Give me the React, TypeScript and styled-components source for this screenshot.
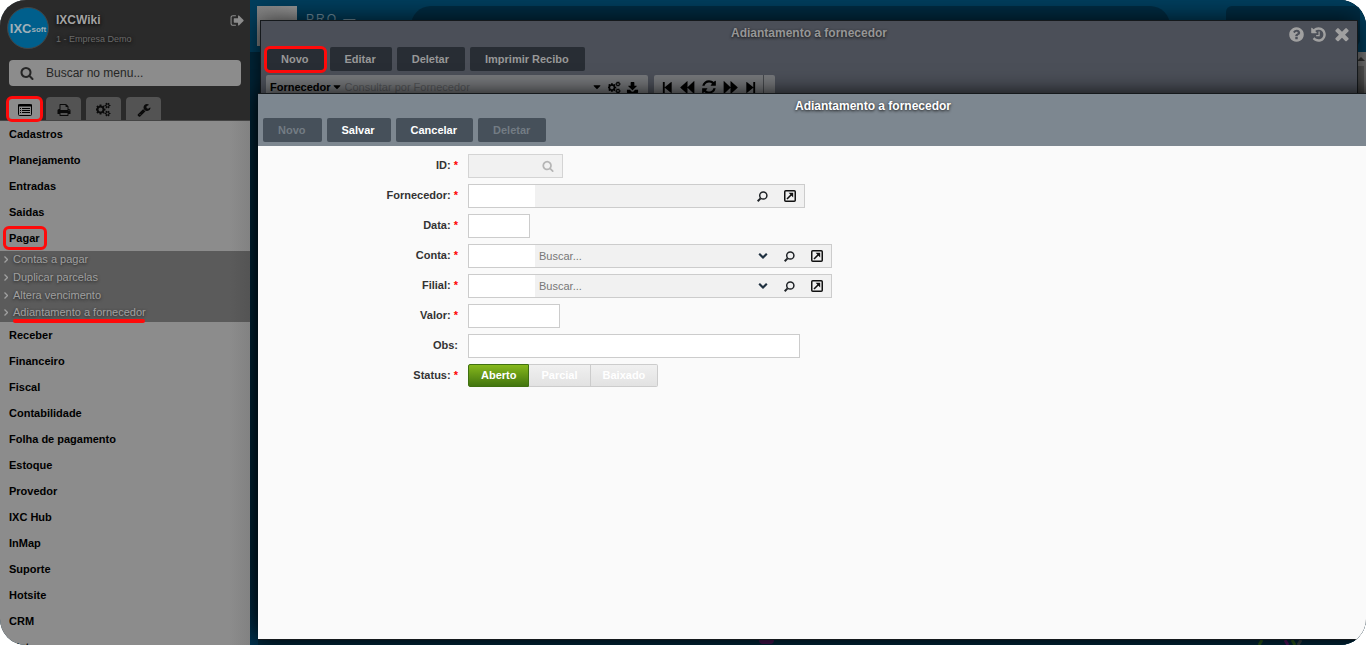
import React from "react";
import styled, { createGlobalStyle, css } from "styled-components";

const Global = createGlobalStyle`
  * { box-sizing: border-box; }
  html, body { margin: 0; background: #fff; }
  body, button, input { font-family: "Liberation Sans", Arial, sans-serif; font-size: 11px; }
  button { cursor: pointer; }
  ul { list-style: none; margin: 0; padding: 0; }
`;

/* ---------- icons ---------- */

const PATHS = {
  signOut:
    "M704 1440q0 4 1 20t.5 26.5-3 23.5-10 19.5-20.5 6.5h-320q-119 0-203.5-84.5t-84.5-203.5v-704q0-119 84.5-203.5t203.5-84.5h320q13 0 22.5 9.5t9.5 22.5q0 4 1 20t.5 26.5-3 23.5-10 19.5-20.5 6.5h-320q-66 0-113 47t-47 113v704q0 66 47 113t113 47h312l11.5 1 11.5 3 8 5.5 7 9 2 13.5zm928-544q0 26-19 45l-544 544q-19 19-45 19t-45-19-19-45v-288h-448q-26 0-45-19t-19-45v-384q0-26 19-45t45-19h448v-288q0-26 19-45t45-19 45 19l544 544q19 19 19 45z",
  search:
    "M1216 832q0-185-131.5-316.5t-316.5-131.5-316.5 131.5-131.5 316.5 131.5 316.5 316.5 131.5 316.5-131.5 131.5-316.5zm512 832q0 52-38 90t-90 38q-54 0-90-38l-343-342q-179 124-399 124-143 0-273.5-55.5t-225-150-150-225-55.5-273.5 55.5-273.5 150-225 225-150 273.5-55.5 273.5 55.5 225 150 150 225 55.5 273.5q0 220-124 399l343 343q37 37 37 90z",
  print:
    "M448 1536h896v-256h-896v256zm0-640h896v-384h-160q-40 0-68-28t-28-68v-160h-640v640zm1152 64q0-26-19-45t-45-19-45 19-19 45 19 45 45 19 45-19 19-45zm128 0v416q0 13-9.5 22.5t-22.5 9.5h-224v160q0 40-28 68t-68 28h-960q-40 0-68-28t-28-68v-160h-224q-13 0-22.5-9.5t-9.5-22.5v-416q0-79 56.5-135.5t135.5-56.5h64v-544q0-40 28-68t68-28h672q40 0 88 20t76 48l152 152q28 28 48 76t20 88v256h64q79 0 135.5 56.5t56.5 135.5z",
  wrench:
    "M448 1472q0-26-19-45t-45-19-45 19-19 45 19 45 45 19 45-19 19-45zm644-420l-682 682q-37 37-90 37-52 0-91-37l-106-108q-38-36-38-90 0-53 38-91l681-681q39 98 114.5 173.5t173.5 114.5zm634-435q0 39-23 106-47 134-164.5 217.5t-258.5 83.5q-185 0-316.5-131.5t-131.5-316.5 131.5-316.5 316.5-131.5q58 0 121.5 16.5t107.5 46.5q16 11 16 28t-16 28l-293 169v224l193 107q5-3 79-48.5t135.5-81 70.5-35.5q15 0 23.5 10t8.5 25z",
  refresh:
    "M1639 1056q0 5-1 7-64 268-268 434.5t-478 166.5q-146 0-282.5-55t-243.5-157l-129 129q-19 19-45 19t-45-19-19-45v-448q0-26 19-45t45-19h448q26 0 45 19t19 45-19 45l-137 137q71 66 161 102t187 36q134 0 250-65t186-179q11-17 53-117 8-23 30-23h192q13 0 22.5 9.5t9.5 22.5zm25-800v448q0 26-19 45t-45 19h-448q-26 0-45-19t-19-45 19-45l138-138q-148-137-349-137-134 0-250 65t-186 179q-11 17-53 117-8 23-30 23h-199q-13 0-22.5-9.5t-9.5-22.5v-7q65-268 270-434.5t480-166.5q146 0 284 55.5t245 156.5l130-129q19-19 45-19t45 19 19 45z",
  history:
    "M1664 896q0 156-61 298t-164 245-245 164-298 61q-172 0-327-72.5t-264-204.5q-7-10-6.5-22.5t8.5-20.5l137-138q10-9 25-9 16 2 23 12 73 95 179 147t225 52q104 0 198.5-40.5t163.5-109.5 109.5-163.5 40.5-198.5-40.5-198.5-109.5-163.5-163.5-109.5-198.5-40.5q-98 0-188 35.5t-160 101.5l137 138q31 30 14 69-17 40-59 40h-448q-26 0-45-19t-19-45v-448q0-42 40-59 39-17 69 14l130 129q107-101 244.5-156.5t284.5-55.5q156 0 298 61t245 164 164 245 61 298zm-640-288v448q0 14-9 23t-23 9h-320q-14 0-23-9t-9-23v-64q0-14 9-23t23-9h224v-352q0-14 9-23t23-9h64q14 0 23 9t9 23z",
  close:
    "M1490 1322q0 40-28 68l-136 136q-28 28-68 28t-68-28l-294-294-294 294q-28 28-68 28t-68-28l-136-136q-28-28-28-68t28-68l294-294-294-294q-28-28-28-68t28-68l136-136q28-28 68-28t68 28l294 294 294-294q28-28 68-28t68 28l136 136q28 28 28 68t-28 68l-294 294 294 294q28 28 28 68z",
  help:
    "M1024 1376v-192q0-14-9-23t-23-9h-192q-14 0-23 9t-9 23v192q0 14 9 23t23 9h192q14 0 23-9t9-23zm256-672q0-88-55.5-163t-138.5-116-170-41q-243 0-371 213-15 24 8 42l132 100q7 6 19 6 16 0 25-12 53-68 86-92 34-24 86-24 48 0 85.5 26t37.5 59q0 38-20 61t-68 45q-63 28-115.5 86.5t-52.5 125.5v36q0 14 9 23t23 9h192q14 0 23-9t9-23q0-19 21.5-49.5t54.5-49.5q32-18 49-28.5t46-35 44.5-48 28-60.5 12.5-81zm384 192q0 209-103 385.5t-279.5 279.5-385.5 103-385.5-103-279.5-279.5-103-385.5 103-385.5 279.5-279.5 385.5-103 385.5 103 279.5 279.5 103 385.5z",
  caret: "M1408 704q0 26-19 45l-448 448q-19 19-45 19t-45-19l-448-448q-19-19-19-45t19-45 45-19h896q26 0 45 19t19 45z",
  first: "M256 128h256v720l900-700q60-40 60 30v1436q0 70-60 30l-900-700v720h-256z",
  last: "M1536 128h-256v720l-900-700q-60-40-60 30v1436q0 70 60 30l900-700v720h256z",
  back: "M896 170q0-70-50-20l-800 720q-30 26 0 52l800 720q50 50 50-20v-700l760 720q60 50 60-20v-1452q0-70-60-20l-760 720z",
  forward: "M896 170q0-70 50-20l800 720q30 26 0 52l-800 720q-50 50-50-20v-700l-760 720q-60 50-60-20v-1452q0-70 60-20l760 720z",
  download:
    "M704 128h384q64 0 64 64v448h300q70 0 30 70l-540 540q-46 46-92 0l-540-540q-40-70 30-70h300v-448q0-64 64-64zM128 1216h420l180 180q168 140 336 0l180-180h420v380q0 68-68 68h-1400q-68 0-68-68z",
  chevron: "M250 620l150-150q40-40 80 0l416 416 416-416q40-40 80 0l150 150q40 40 0 80l-606 606q-40 40-80 0l-606-606q-40-40 0-80z",
};

type IconName = keyof typeof PATHS;

const Icon = ({ name, size }: { name: IconName; size: number }) => (
  <svg width={size} height={size} viewBox="0 0 1792 1792" fill="currentColor" aria-hidden="true">
    <path d={PATHS[name]} />
  </svg>
);

const SMALL_COG =
  "M1856 1338v140q0 16-149 31-12 27-30 52 51 113 51 138 0 4-4 7-122 71-124 71-8 0-46-47t-52-68q-20 2-30 2t-30-2q-14 21-52 68t-46 47q-2 0-124-71-4-3-4-7 0-25 51-138-18-25-30-52-149-15-149-31v-140q0-16 149-31 13-29 30-52-51-113-51-138 0-4 4-7 4-2 35-20t59-34 30-16q8 0 46 46.5t52 67.5q20-2 30-2t30 2q51-71 92-112l6-2q4 0 124 70 4 3 4 7 0 25-51 138 17 23 30 52 149 15 149 31zM1600 1408q0-52-38-90t-90-38-90 38-38 90q0 53 37.5 90.5t90.5 37.5 90.5-37.5 37.5-90.5z";

const CogsIcon = ({ size }: { size: number }) => (
  <svg width={size} height={size} viewBox="0 0 1920 1792" fill="currentColor" fillRule="evenodd" aria-hidden="true">
    <path d="M832 896q0-106-75-181t-181-75-181 75-75 181 75 181 181 75 181-75 75-181zm384-91v185q0 10-7 19.5t-16 10.5l-155 24q-11 35-32 76 34 48 90 115 7 11 7 20 0 12-7 19-23 30-82.5 89.5t-78.5 59.5q-11 0-21-7l-115-90q-37 19-77 31-11 108-23 155-7 24-30 24h-186q-11 0-20-7.5t-10-17.5l-23-153q-34-10-75-31l-118 89q-7 7-20 7-11 0-21-8-144-133-144-160 0-9 7-19 10-14 41-53t47-61q-23-44-35-82l-152-24q-10-1-17-9.5t-7-19.5v-185q0-10 7-19.5t16-10.5l155-24q11-35 32-76-34-48-90-115-7-11-7-20 0-12 7-20 22-30 82-89t79-59q11 0 21 7l115 90q34-18 77-32 11-108 23-154 7-24 30-24h186q11 0 20 7.5t10 17.5l23 153q34 10 75 31l118-89q8-7 20-7 11 0 21 8 144 133 144 160 0 8-7 19-12 16-42 54t-45 60q23 48 34 82l152 23q10 2 17 10.5t7 19.5z" />
    <path d={SMALL_COG} />
    <path d={SMALL_COG} transform="translate(0 -1024)" />
  </svg>
);

const ListIcon = () => (
  <svg width="14" height="12" viewBox="0 0 14 12" aria-hidden="true">
    <rect x="0.5" y="0.5" width="13" height="11" rx="1" fill="none" stroke="#000" />
    <path d="M0 0.5h14v2H0z" />
    <path d="M2 4.5h1M4 4.5h8M2 6.5h1M4 6.5h8M2 8.5h1M4 8.5h8" stroke="#000" />
  </svg>
);

const LensIcon = () => (
  <svg width="11" height="11" viewBox="0 0 11 11" fill="none" stroke="#1f2327" strokeWidth="1.5" aria-hidden="true">
    <circle cx="6.3" cy="4.5" r="3.6" />
    <path d="M3.6 7.4L0.7 10.2" strokeWidth="2" />
  </svg>
);

const OpenIcon = () => (
  <svg width="12" height="12" viewBox="0 0 12 12" fill="none" stroke="#111" aria-hidden="true">
    <rect x="0.75" y="0.75" width="10.5" height="10.5" rx="1" strokeWidth="1.5" />
    <path d="M3 9L8 4" strokeWidth="1.6" />
    <path d="M4.6 2.8h4.6v4.6z" fill="#111" stroke="none" />
  </svg>
);

/* ---------- shell ---------- */

const Shell = styled.div`
  display: flex;
  height: 100vh;
  overflow: hidden;
  border-radius: 26px;
  background: #00283d;
`;

const Sidebar = styled.aside`
  display: flex;
  flex-direction: column;
  flex: none;
  width: 250px;
  overflow: hidden;
  background: linear-gradient(to right, #8c8c8c 230px, #828282);
`;

const SideHeader = styled.header`
  display: flex;
  flex-direction: column;
  height: 121px;
  flex: none;
  padding: 7px 9px 0;
  background: #2a2a2a;
  border-bottom: 1px solid #444;
`;

const Profile = styled.div`
  display: flex;
  height: 42px;
  margin-left: -2px;
`;

const Avatar = styled.div`
  display: flex;
  align-items: center;
  justify-content: center;
  flex: none;
  width: 42px;
  height: 42px;
  border: 1px solid #444;
  border-radius: 50%;
  background: #005f8c;
  color: #9fb0b9;
  font-size: 13px;
  font-weight: bold;
`;

const AvatarSuffix = styled.span`
  font-size: 8px;
  padding-top: 3px;
`;

const ProfileText = styled.div`
  flex: 1;
  padding: 6px 0 0 7px;
  text-shadow: 0 1px 4px #000;
`;

const UserName = styled.div`
  color: #a3a3a3;
  font-size: 12px;
  font-weight: bold;
  line-height: 14px;
`;

const Company = styled.div`
  margin-top: 7px;
  color: #6a6a6a;
  font-size: 9px;
  line-height: 10px;
`;

const PlainButton = styled.button`
  display: flex;
  align-items: center;
  justify-content: center;
  padding: 0;
  border: 0;
  background: none;
  color: inherit;
`;

const ExitButton = styled(PlainButton)`
  align-self: flex-start;
  margin: 6px -4px 0 0;
  color: #8c8c8c;
`;

const MenuSearch = styled.label`
  display: flex;
  align-items: center;
  gap: 10px;
  height: 27px;
  margin-top: 11px;
  padding-left: 11px;
  border-radius: 4px;
  background: #8c8c8c;
  color: #262626;
`;

const MenuSearchInput = styled.input`
  flex: 1;
  min-width: 0;
  border: 0;
  outline: 0;
  background: none;
  color: #262626;
  font-size: 12px;
  &::placeholder { color: #262626; opacity: 1; }
`;

const highlight = css<{ $marked?: boolean }>`
  position: relative;
  ${(p) =>
    p.$marked &&
    css`
      &::after {
        content: "";
        position: absolute;
        inset: -1px -2px -2px;
        border: 3px solid #ff0a0a;
        border-radius: 6px;
        pointer-events: none;
      }
    `}
`;

const Tabs = styled.div`
  display: flex;
  gap: 5px;
  margin-top: 11px;
  margin-left: -3px;
  padding-left: 2px;
`;

const Tab = styled.button<{ $marked?: boolean }>`
  display: flex;
  align-items: center;
  justify-content: center;
  width: 35px;
  height: 23px;
  margin-left: ${(p) => (p.$marked ? "0" : "0")};
  padding: 2px 0 0;
  border: 0;
  border-radius: 4px 4px 0 0;
  background: ${(p) => (p.$marked ? "#8c8c8c" : "#535353")};
  color: #0a0a0a;
  ${highlight}
  &:first-child { width: 33px; }
`;

const MenuItem = styled.li`
  height: 26px;
  padding-left: 9px;
`;

const MenuLink = styled.a<{ $marked?: boolean }>`
  display: inline-block;
  color: #000;
  font-weight: bold;
  line-height: 26px;
  text-decoration: none;
  ${highlight}
  &::after { inset: 1px -7px 1px -6px; }
`;

const SubMenu = styled.ul`
  display: grid;
  height: 71px;
  flex: none;
  padding-left: 4px;
  background: linear-gradient(to right, #5b5b5b 230px, #545454);
`;

const SubLink = styled.a<{ $marked?: boolean }>`
  position: relative;
  display: inline-flex;
  align-items: center;
  gap: 5px;
  color: #a0a0a0;
  line-height: 17px;
  text-decoration: none;
  text-shadow: 0 1px 3px #222;
  ${(p) =>
    p.$marked &&
    css`
      &::after {
        content: "";
        position: absolute;
        left: 9px;
        right: 1px;
        bottom: -2px;
        height: 4px;
        border-radius: 2px;
        background: #ff0a0a;
      }
    `}
`;

/* ---------- desktop ---------- */

const Desktop = styled.main`
  position: relative;
  display: flex;
  flex-direction: column;
  justify-content: space-between;
  flex: 1;
  min-width: 0;
  overflow: hidden;
  background: linear-gradient(#00283d 560px, #003350);
`;

const TopBar = styled.div`
  display: flex;
  align-items: flex-start;
  height: 52px;
  padding: 6px 6px 0 7px;
  background: #003e5d;
`;

const TopLogo = styled.div`
  width: 40px;
  height: 40px;
  background: linear-gradient(to right, #858585, #9a9a9a);
`;

const TopName = styled.div`
  width: 114px;
  padding: 6px 0 0 9px;
  color: #7593a3;
  font-size: 12px;
  line-height: 14px;
  letter-spacing: 2px;
`;

const TopSearch = styled.div`
  flex: 1;
  height: 46px;
  margin-right: 56px;
  border-radius: 20px 20px 0 0;
  background: #002c43;
`;

const TopPanel = styled.div`
  width: 134px;
  height: 40px;
  border-radius: 6px;
  background: #002c43;
`;

const ChartEdge = styled.div`
  display: flex;
  justify-content: space-between;
  height: 5px;
  margin-left: 8px;
  padding: 0 56px 0 501px;
  background: #00283d;
`;

const ChartPill = styled.div`
  width: 15px;
  height: 4px;
  border-radius: 0 0 4px 4px;
  background: #4b1456;
`;

const ScrollTrack = styled.div`
  position: absolute;
  top: 52px;
  right: 0;
  bottom: 0;
  width: 10px;
  padding: 5px 2px 0 1px;
  background: #7d7d7d;
`;

const ScrollThumb = styled.div`
  height: 100px;
  margin-top: 5px;
  background: #606060;
`;

const ScrollArrow = styled.div`
  border: 4px solid transparent;
  border-top: 0;
  border-bottom-color: #333;
`;

const Window = styled.section`
  position: absolute;
  display: flex;
  flex-direction: column;
  overflow: hidden;
  border: 1px solid #15191c;
`;

const BackWindow = styled(Window)`
  top: 20px;
  left: 10px;
  right: 8px;
  bottom: 20px;
  background: #4b4f58;
  box-shadow: 0 0 24px rgba(0, 0, 0, 0.8);
`;

const FrontWindow = styled(Window)`
  top: 93px;
  left: 8px;
  right: -122px;
  bottom: 5px;
  border-width: 1px 0;
  background: #fafafa;
  box-shadow: 0 0 20px rgba(0, 0, 0, 0.85);
`;

const Title = styled.h2<{ $dim?: boolean }>`
  margin: 0;
  height: 24px;
  color: ${(p) => (p.$dim ? "#969696" : "#fff")};
  font-size: 12px;
  line-height: 24px;
  text-align: center;
  text-shadow: 0 1px 3px #111;
`;

const BackTitle = styled(Title)`
  height: 26px;
`;

const WindowTools = styled.div`
  position: absolute;
  top: 3px;
  right: 5px;
  display: flex;
  gap: 5px;
  color: #a0a0a0;
`;

const ButtonBar = styled.div`
  display: flex;
  gap: 5px;
  padding: 0 5px;
`;

const FrontHeader = styled.header`
  flex: none;
  height: 52px;
  background: #7d8790;
`;

const ActionButton = styled.button<{ $dim?: boolean; $marked?: boolean }>`
  height: 24px;
  padding: 0 16px 0 15px;
  border: 0;
  border-radius: 2px;
  background: ${(p) => (p.$dim ? "#282d34" : "#46505a")};
  color: ${(p) => (p.$dim ? "#989898" : "#fff")};
  font-weight: bold;
  line-height: 24px;
  ${highlight}
  &:disabled { color: #737c84; }
`;

const SearchStrip = styled.div`
  display: flex;
  gap: 6px;
  margin-top: 4px;
  padding-left: 5px;
`;

const StripBox = styled.div`
  display: flex;
  align-items: center;
  height: 24px;
  background: #75777a;
  border-radius: 2px;
  color: #000;
`;

const QueryBox = styled(StripBox)`
  width: 382px;
  padding: 0 9px 0 4px;
  gap: 5px;
`;

const FieldPicker = styled(PlainButton)`
  font-size: 11px;
  font-weight: bold;
  color: #000;
`;

const QueryInput = styled.input`
  flex: 1;
  min-width: 0;
  margin-left: -3px;
  padding: 0;
  border: 0;
  background: none;
  &::placeholder { color: #55575a; opacity: 1; }
`;

const PagerBox = styled(StripBox)`
  gap: 6px;
  padding-left: 7px;
`;

const PagerEnd = styled.span`
  width: 12px;
  height: 24px;
  border-left: 1px solid #45484c;
`;

/* ---------- form ---------- */

const Form = styled.form`
  display: flex;
  flex-direction: column;
  gap: 6px;
  padding-top: 8px;
`;

const Row = styled.div`
  display: flex;
  gap: 10px;
  height: 24px;
`;

const Label = styled.label`
  width: 200px;
  color: #333;
  font-weight: bold;
  line-height: 22px;
  text-align: right;
`;

const Required = styled.span`
  color: #f00;
`;

const TextInput = styled.input<{ $width: number }>`
  width: ${(p) => p.$width}px;
  height: 24px;
  padding: 0 4px;
  border: 1px solid #ccc;
  background: #fff;
`;

const Combo = styled.div<{ $width: number; $disabled?: boolean }>`
  display: flex;
  align-items: center;
  width: ${(p) => p.$width}px;
  padding-right: 1px;
  border: 1px solid ${(p) => (p.$disabled ? "#d4d4d4" : "#ccc")};
  background: #f1f1f1;
`;

const CodeInput = styled.input`
  width: 66px;
  height: 22px;
  padding: 0 4px;
  border: 0;
  background: #fff;
  &:disabled { background: #f1f1f1; }
`;

const NameInput = styled.input`
  flex: 1;
  min-width: 0;
  height: 22px;
  padding: 0 4px;
  border: 0;
  background: none;
  &::placeholder { color: #777; opacity: 1; }
`;

const ComboButton = styled(PlainButton)`
  width: 27px;
  height: 22px;
  color: #1f3040;
  &:disabled { color: #b5b5b5; }
`;

const Segments = styled.div`
  display: flex;
`;

const Segment = styled.button<{ $active?: boolean }>`
  height: 23px;
  padding: 0 12px 2px;
  border: 1px solid ${(p) => (p.$active ? "#3f7010" : "#ccc")};
  border-left-width: ${(p) => (p.$active ? "1px" : "0")};
  background: ${(p) => (p.$active ? "linear-gradient(#86b81c, #42750f)" : "linear-gradient(#f0f0f0, #e2e2e2)")};
  color: #fff;
  font-weight: bold;
  &:first-child { border-radius: 2px 0 0 2px; }
  &:last-child { border-radius: 0 2px 2px 0; }
`;

const MENU_TOP = ["Cadastros", "Planejamento", "Entradas", "Saidas", "Pagar"];
const SUBMENU = ["Contas a pagar", "Duplicar parcelas", "Altera vencimento", "Adiantamento a fornecedor"];
const MENU_BOTTOM = [
  "Receber", "Financeiro", "Fiscal", "Contabilidade", "Folha de pagamento", "Estoque",
  "Provedor", "IXC Hub", "InMap", "Suporte", "Hotsite", "CRM", "Sistema",
];

const Menu = ({ items }: { items: string[] }) => (
  <ul>
    {items.map((item) => (
      <MenuItem key={item}>
        <MenuLink href="#" $marked={item === "Pagar"}>{item}</MenuLink>
      </MenuItem>
    ))}
  </ul>
);

const FieldLabel = ({ id, text, optional }: { id: string; text: string; optional?: boolean }) => (
  <Label htmlFor={id}>
    {text}:{!optional && <Required> *</Required>}
  </Label>
);

const LookupRow = ({ id, label, width, select }: { id: string; label: string; width: number; select?: boolean }) => (
  <Row>
    <FieldLabel id={id} text={label} />
    <Combo $width={width}>
      <CodeInput id={id} />
      <NameInput aria-label={`${label} nome`} placeholder={select ? "Buscar..." : undefined} />
      {select && (
        <ComboButton type="button" aria-label="Abrir lista"><Icon name="chevron" size={12} /></ComboButton>
      )}
      <ComboButton type="button" aria-label="Pesquisar"><LensIcon /></ComboButton>
      <ComboButton type="button" aria-label="Abrir cadastro"><OpenIcon /></ComboButton>
    </Combo>
  </Row>
);

export default function App() {
  return (
    <>
      <Global />
      <Shell>
        <Sidebar>
          <SideHeader>
            <Profile>
              <Avatar>IXC<AvatarSuffix>soft</AvatarSuffix></Avatar>
              <ProfileText>
                <UserName>IXCWiki</UserName>
                <Company>1 - Empresa Demo</Company>
              </ProfileText>
              <ExitButton aria-label="Sair"><Icon name="signOut" size={15} /></ExitButton>
            </Profile>
            <MenuSearch>
              <Icon name="search" size={14} />
              <MenuSearchInput placeholder="Buscar no menu..." aria-label="Buscar no menu" />
            </MenuSearch>
            <Tabs>
              <Tab $marked aria-label="Menu"><ListIcon /></Tab>
              <Tab aria-label="Imprimir"><Icon name="print" size={14} /></Tab>
              <Tab aria-label="Configurar"><CogsIcon size={15} /></Tab>
              <Tab aria-label="Ferramentas"><Icon name="wrench" size={14} /></Tab>
            </Tabs>
          </SideHeader>
          <Menu items={MENU_TOP} />
          <SubMenu>
            {SUBMENU.map((item) => (
              <li key={item}>
                <SubLink href="#" $marked={item === "Adiantamento a fornecedor"}>
                  <svg width="4" height="7" viewBox="0 0 4 7" fill="none" stroke="currentColor" strokeWidth="1.3" aria-hidden="true">
                    <path d="M0.5 0.5L3.5 3.5L0.5 6.5" />
                  </svg>
                  {item}
                </SubLink>
              </li>
            ))}
          </SubMenu>
          <Menu items={MENU_BOTTOM} />
        </Sidebar>

        <Desktop>
          <TopBar>
            <TopLogo />
            <TopName>PRO —</TopName>
            <TopSearch />
            <TopPanel />
          </TopBar>
          <ChartEdge>
            <ChartPill />
            <svg width="52" height="5" viewBox="0 0 52 5" fill="none" strokeWidth="3" aria-hidden="true">
              <path d="M4 0L1 5" stroke="#2c5a1c" />
              <path d="M27 0L30 5" stroke="#5a1466" />
              <path d="M34 0L37 5" stroke="#2c5a1c" />
              <path d="M43 0L40 5" stroke="#3c4448" />
            </svg>
          </ChartEdge>
          <ScrollTrack><ScrollArrow /><ScrollThumb /></ScrollTrack>

          <BackWindow>
            <header>
              <BackTitle $dim>Adiantamento a fornecedor</BackTitle>
              <WindowTools>
                <PlainButton aria-label="Ajuda"><Icon name="help" size={17} /></PlainButton>
                <PlainButton aria-label="Histórico"><Icon name="history" size={17} /></PlainButton>
                <PlainButton aria-label="Fechar"><Icon name="close" size={20} /></PlainButton>
              </WindowTools>
              <ButtonBar>
                <ActionButton $dim $marked>Novo</ActionButton>
                <ActionButton $dim>Editar</ActionButton>
                <ActionButton $dim>Deletar</ActionButton>
                <ActionButton $dim>Imprimir Recibo</ActionButton>
              </ButtonBar>
            </header>
            <SearchStrip>
              <QueryBox>
                <FieldPicker>Fornecedor <Icon name="caret" size={12} /></FieldPicker>
                <QueryInput placeholder="Consultar por Fornecedor" aria-label="Consultar por Fornecedor" />
                <PlainButton aria-label="Opções"><Icon name="caret" size={12} /></PlainButton>
                <PlainButton aria-label="Configurar"><CogsIcon size={13} /></PlainButton>
                <PlainButton aria-label="Baixar"><Icon name="download" size={13} /></PlainButton>
              </QueryBox>
              <PagerBox>
                <PlainButton aria-label="Primeiro"><Icon name="first" size={13} /></PlainButton>
                <PlainButton aria-label="Anterior"><Icon name="back" size={15} /></PlainButton>
                <PlainButton aria-label="Atualizar"><Icon name="refresh" size={16} /></PlainButton>
                <PlainButton aria-label="Próximo"><Icon name="forward" size={15} /></PlainButton>
                <PlainButton aria-label="Último"><Icon name="last" size={13} /></PlainButton>
                <PagerEnd />
              </PagerBox>
            </SearchStrip>
          </BackWindow>

          <FrontWindow>
            <FrontHeader>
              <Title>Adiantamento a fornecedor</Title>
              <ButtonBar>
                <ActionButton disabled>Novo</ActionButton>
                <ActionButton>Salvar</ActionButton>
                <ActionButton>Cancelar</ActionButton>
                <ActionButton disabled>Deletar</ActionButton>
              </ButtonBar>
            </FrontHeader>
            <Form>
              <Row>
                <FieldLabel id="id" text="ID" />
                <Combo $width={95} $disabled>
                  <CodeInput id="id" disabled />
                  <ComboButton type="button" disabled aria-label="Pesquisar"><Icon name="search" size={12} /></ComboButton>
                </Combo>
              </Row>
              <LookupRow id="fornecedor" label="Fornecedor" width={337} />
              <Row>
                <FieldLabel id="data" text="Data" />
                <TextInput id="data" $width={62} />
              </Row>
              <LookupRow id="conta" label="Conta" width={364} select />
              <LookupRow id="filial" label="Filial" width={364} select />
              <Row>
                <FieldLabel id="valor" text="Valor" />
                <TextInput id="valor" $width={92} />
              </Row>
              <Row>
                <FieldLabel id="obs" text="Obs" optional />
                <TextInput id="obs" $width={332} />
              </Row>
              <Row>
                <FieldLabel id="status" text="Status" />
                <Segments>
                  <Segment type="button" id="status" $active>Aberto</Segment>
                  <Segment type="button">Parcial</Segment>
                  <Segment type="button">Baixado</Segment>
                </Segments>
              </Row>
            </Form>
          </FrontWindow>
        </Desktop>
      </Shell>
    </>
  );
}
